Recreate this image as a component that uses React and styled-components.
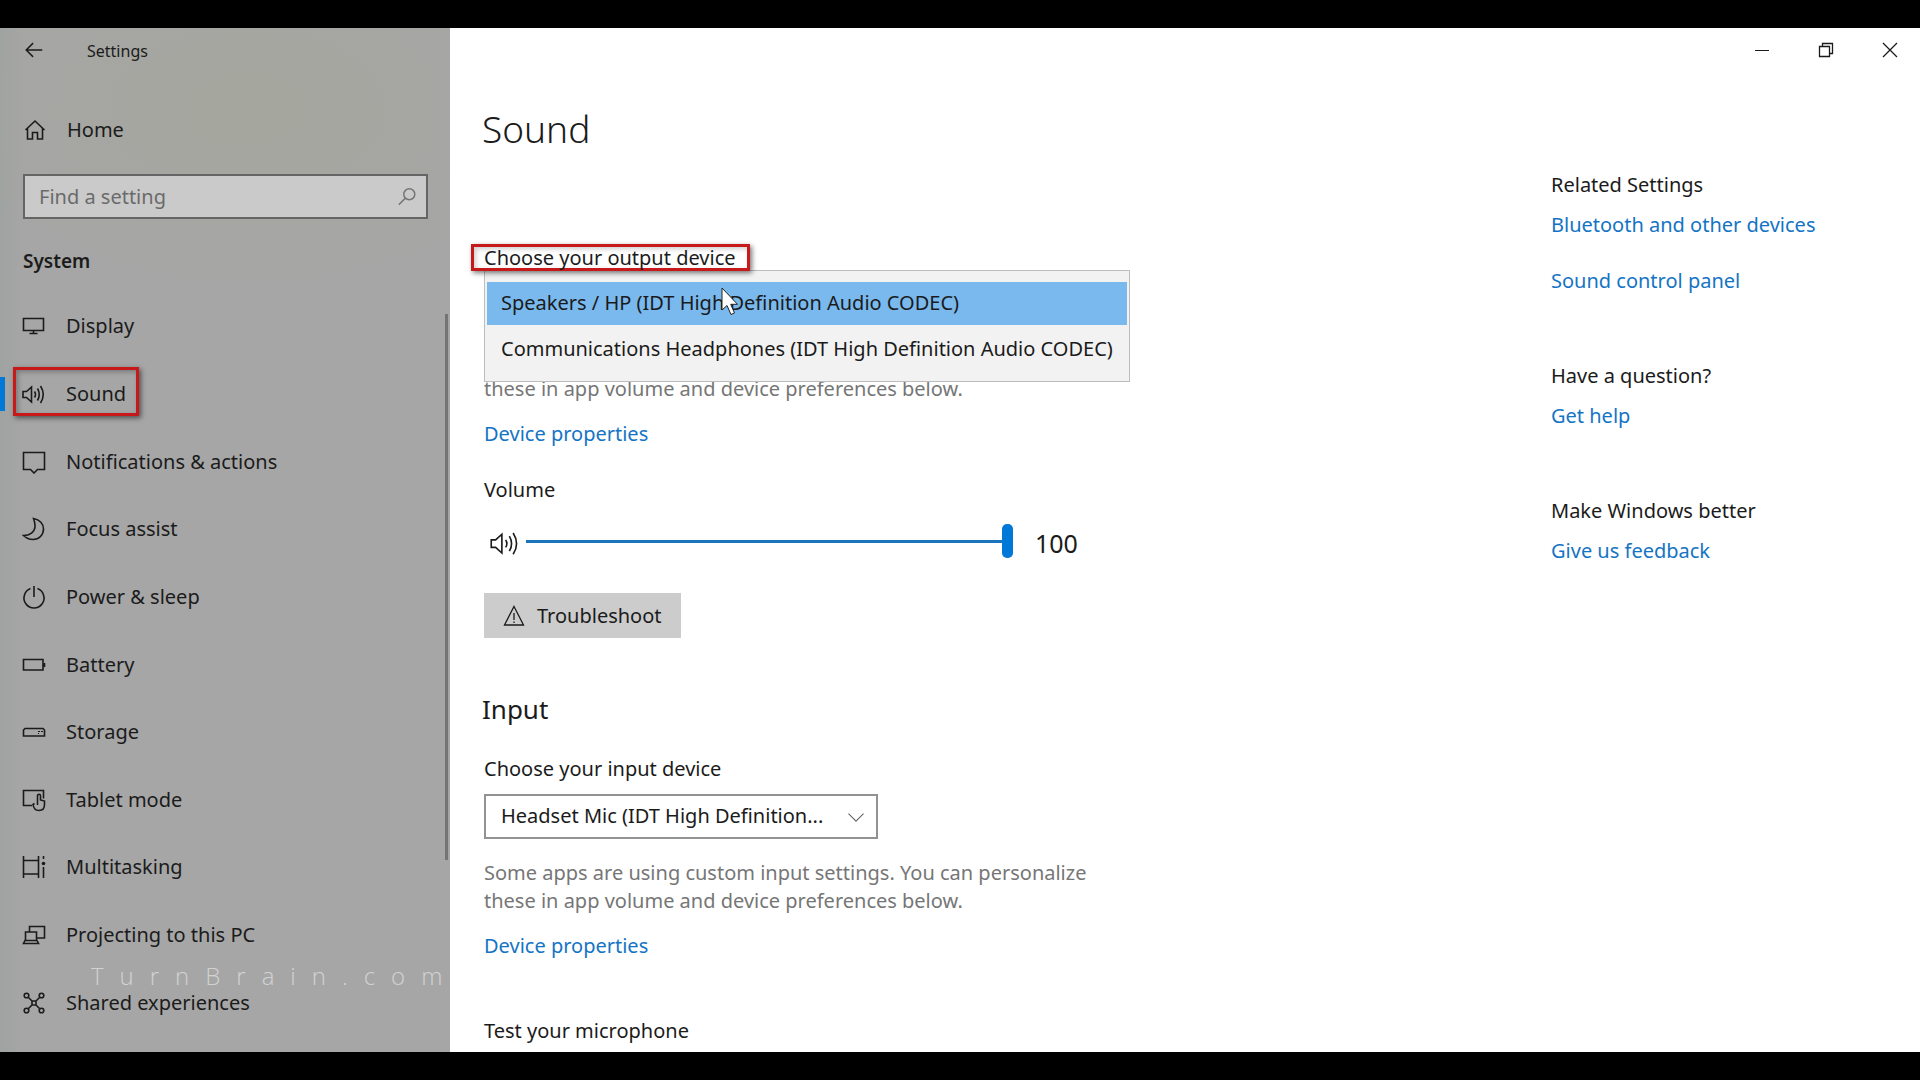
import React, { useState } from "react";
import styled, { createGlobalStyle } from "styled-components";

const icons = {
  back: <path d="M3.5 12H21M11 4.5L3.5 12L11 19.5" />,
  home: <path d="M2.5 12L12 3L21.5 12M4.5 10.5V21H9.5V14.5H14.5V21H19.5V10.5" />,
  search: <><circle cx="14.5" cy="9" r="6" /><path d="M10 13.5L3 20.5" /></>,
  display: <path d="M1.5 4.5H21.5V16.5H1.5ZM11.5 16.5V19.5M7.5 19.5H15.5" />,
  sound: <path d="M1 9.5H4.5L9.5 5V20L4.5 15.5H1ZM12.5 9.5Q14.5 12.5 12.5 15.5M15.5 6.5Q19 12.5 15.5 18.5M18.5 4Q24 12.5 18.5 21" />,
  notifications: <path d="M1.5 2.5H22.5V19.5H15.5L12 23L8.5 19.5H1.5Z" />,
  focus: <path d="M11.5 1.5C18 2.5 21.5 7 21.5 12C21.5 18 17 22.5 11 22.5C7 22.5 4 21 1.5 18.5C8 18.5 12.5 15 13 10C13.2 7 12.5 4 11.5 1.5Z" />,
  power: <path d="M12 1V12M8.5 3.6A10 10 0 1 0 15.5 3.6" />,
  battery: <path d="M1.5 6.5H21V17H1.5ZM22.5 10V14" />,
  storage: <><path d="M3 8.5H21L22.5 10V16H1.5V10Z" /><path d="M16 11.5H18M19 11.5H21M16 13.5H17" strokeWidth="1" /></>,
  tablet: <path d="M10 17.5H1.5V2.5H21.5V10.5M12.5 15.5L11 16.5C11.5 20 13 22.5 17 22.5C21 22.5 22.5 20 22.5 16.5V13L18.5 12V7.5C18.5 5.8 15.5 5.8 15.5 7.5V17" />,
  multitask: <><path d="M1.5 5.5H16.5V19H1.5ZM1.5 1V5.5M16.5 1V5.5M1.5 19V23M16.5 19V23M21.5 1V4M21.5 12V23" /><circle cx="21.5" cy="8.5" r="1.8" fill="currentColor" stroke="none" /></>,
  project: <path d="M7.5 8.5V3.5H22.5V15H14.5M3.5 9H14.5V17.5H3.5ZM3.5 16.5L1.5 20.5H16.5L14.5 16.5" />,
  shared: <>
    <circle cx="4.5" cy="4.5" r="2.3" /><circle cx="19.5" cy="4.5" r="2.3" />
    <circle cx="4.5" cy="19.5" r="2.3" /><circle cx="19.5" cy="19.5" r="2.3" />
    <path d="M6.5 6.5L10 10M17.5 6.5L14 10M6.5 17.5L10 14M17.5 17.5L14 14M10 10H14V14H10Z" />
  </>,
  warning: <path d="M12 2.5L21.5 21H2.5ZM12 9V16M12 17.5V19" />,
  chevron: <path d="M3 8L12 17L21 8" />,
  minimize: <path d="M5 12.5H19" />,
  restore: <path d="M5.5 8.5H15.5V18.5H5.5ZM8.5 8.5V5.5H18.5V15.5H15.5" />,
  close: <path d="M5 5L19 19M19 5L5 19" />,
};

function Icon({ name, size = 24, weight = 1.6 }) {
  return (
    <Svg width={size} height={size} viewBox="0 0 24 24" strokeWidth={weight} aria-hidden="true">
      {icons[name]}
    </Svg>
  );
}

const menu = [
  { icon: "display", label: "Display" },
  { icon: "sound", label: "Sound" },
  { icon: "notifications", label: "Notifications & actions" },
  { icon: "focus", label: "Focus assist" },
  { icon: "power", label: "Power & sleep" },
  { icon: "battery", label: "Battery" },
  { icon: "storage", label: "Storage" },
  { icon: "tablet", label: "Tablet mode" },
  { icon: "multitask", label: "Multitasking" },
  { icon: "project", label: "Projecting to this PC" },
  { icon: "shared", label: "Shared experiences" },
];

const related = [
  { title: "Related Settings", links: ["Bluetooth and other devices", "Sound control panel"] },
  { title: "Have a question?", links: ["Get help"] },
  { title: "Make Windows better", links: ["Give us feedback"] },
];

export default function App() {
  const [volume, setVolume] = useState(100);
  const [output, setOutput] = useState("speakers");

  return <>
    <GlobalStyle />
    <Screen>
      <Sidebar>
        <SideTitle>
          <IconButton aria-label="Back"><Icon name="back" size={22} /></IconButton>
          <AppName>Settings</AppName>
        </SideTitle>
        <HomeLink href="#home"><Icon name="home" />Home</HomeLink>
        <SearchBox>
          <SearchInput type="text" placeholder="Find a setting" aria-label="Find a setting" />
          <Icon name="search" size={22} />
        </SearchBox>
        <Category>System</Category>
        <MenuArea>
          <Menu>
            {menu.map((item) => (
              <MenuItem key={item.label} $active={item.label === "Sound"}>
                <MenuLink href="#page" $marked={item.label === "Sound"}>
                  <Icon name={item.icon} />{item.label}
                </MenuLink>
              </MenuItem>
            ))}
          </Menu>
          <ScrollThumb />
        </MenuArea>
        <Watermark>TurnBrain.com</Watermark>
      </Sidebar>

      <Main>
        <WindowBar>
          <WindowButton aria-label="Minimize"><Icon name="minimize" weight={1} /></WindowButton>
          <WindowButton aria-label="Restore"><Icon name="restore" weight={1.3} /></WindowButton>
          <WindowButton aria-label="Close"><Icon name="close" weight={1.3} /></WindowButton>
        </WindowBar>
        <Columns>
          <Content>
            <Title>Sound</Title>
            <MarkedLabel htmlFor="output">Choose your output device</MarkedLabel>
            <Popup>
              <OutputList id="output" size={2} value={output} onChange={(e) => setOutput(e.target.value)}>
                <option value="speakers">Speakers / HP (IDT High Definition Audio CODEC)</option>
                <option value="headphones">Communications Headphones (IDT High Definition Audio CODEC)</option>
              </OutputList>
              <Cursor width="18" height="29" viewBox="0 0 18 29" aria-hidden="true">
                <path d="M1 1V23L6 18.5L10 27.5L13.5 26L9.7 17.3H16.5Z" />
              </Cursor>
            </Popup>
            <OutputNote>these in app volume and device preferences below.</OutputNote>
            <PropertiesLink href="#output-properties">Device properties</PropertiesLink>

            <VolumeLabel htmlFor="volume">Volume</VolumeLabel>
            <VolumeRow>
              <Icon name="sound" size={30} weight={1.3} />
              <Slider id="volume" type="range" min="0" max="100" value={volume}
                onChange={(e) => setVolume(e.target.value)} />
              <VolumeValue htmlFor="volume">{volume}</VolumeValue>
            </VolumeRow>
            <Troubleshoot><Icon name="warning" weight={1.3} />Troubleshoot</Troubleshoot>

            <SectionTitle>Input</SectionTitle>
            <InputLabel htmlFor="input">Choose your input device</InputLabel>
            <SelectBox>
              <Select id="input">
                <option>Headset Mic (IDT High Definition...</option>
              </Select>
              <Icon name="chevron" size={20} weight={1.3} />
            </SelectBox>
            <Note>Some apps are using custom input settings. You can personalize these in app volume and device preferences below.</Note>
            <PropertiesLink href="#input-properties">Device properties</PropertiesLink>
            <TestTitle>Test your microphone</TestTitle>
          </Content>

          <Aside>
            {related.map((group) => (
              <section key={group.title}>
                <GroupTitle>{group.title}</GroupTitle>
                <GroupLinks>
                  {group.links.map((link) => <Link key={link} href="#related">{link}</Link>)}
                </GroupLinks>
              </section>
            ))}
          </Aside>
        </Columns>
      </Main>
    </Screen>
  </>;
}

const GlobalStyle = createGlobalStyle`
  * {
    box-sizing: border-box;
  }
  body {
    margin: 0;
    background: #000;
    color: #1b1b1b;
    font-family: "Noto Sans", "Open Sans", sans-serif;
    font-size: 20px;
    line-height: 28px;
  }
  button, input, select, option {
    font: inherit;
    color: inherit;
  }
`;

const Svg = styled.svg`
  flex: none;
  fill: none;
  stroke: currentColor;
`;

const Screen = styled.div`
  display: flex;
  min-height: 100vh;
  border: solid #000;
  border-width: 28px 0;
`;

/* sidebar */
const Sidebar = styled.aside`
  position: relative;
  display: flex;
  flex-direction: column;
  flex: none;
  width: 450px;
  background:
    radial-gradient(ellipse 300px 180px at 55% 8%, #a5a69d, transparent),
    linear-gradient(90deg, #9fa3a1, #a6a6a6 24px);
`;
const SideTitle = styled.header`
  display: flex;
  align-items: center;
  gap: 42px;
  height: 44px;
  padding-left: 23px;
`;
const IconButton = styled.button`
  display: flex;
  padding: 0;
  border: 0;
  background: none;
`;
const AppName = styled.span`
  padding-top: 2px;
  font-size: 16px;
`;
const HomeLink = styled.a`
  display: flex;
  align-items: center;
  gap: 20px;
  margin: 44px 0 0 23px;
  color: inherit;
  text-decoration: none;
`;
const SearchBox = styled.div`
  display: flex;
  align-items: center;
  height: 45px;
  margin: 30px 22px 0 23px;
  padding: 0 8px 0 14px;
  border: 2px solid #656565;
  background: #cacaca;
  color: #757575;
`;
const SearchInput = styled.input`
  flex: 1;
  min-width: 0;
  padding: 0;
  border: 0;
  outline: 0;
  background: none;
  &::placeholder {
    color: #6a6a6a;
  }
`;
const Category = styled.h2`
  margin: 28px 0 0 23px;
  font-size: 19px;
  font-weight: 600;
`;
const MenuArea = styled.nav`
  display: flex;
  flex: 1;
  margin-top: 18px;
  padding-bottom: 15px;
`;
const Menu = styled.ul`
  display: flex;
  flex: 1;
  flex-direction: column;
  margin: 0;
  padding: 0;
  list-style: none;
`;
const MenuItem = styled.li`
  display: flex;
  flex: 1;
  align-items: center;
  min-height: 50px;
  &::before {
    content: "";
    width: 5px;
    height: 34px;
    background: ${(p) => (p.$active ? "#0078d7" : "none")};
  }
`;
const MenuLink = styled.a`
  display: flex;
  align-items: center;
  gap: 20px;
  height: 49px;
  margin: 0 0 5px 8px;
  padding: 4px 10px 0 6px;
  border: 3px solid ${(p) => (p.$marked ? "#c8191a" : "transparent")};
  box-shadow: ${(p) => (p.$marked ? "2px 2px 5px #0008, inset 2px 2px 5px #0004" : "none")};
  color: inherit;
  text-decoration: none;
`;
const ScrollThumb = styled.div`
  width: 3px;
  height: 546px;
  margin: 21px 2px 0 0;
  background: #747474;
`;
const Watermark = styled.div`
  position: absolute;
  left: 91px;
  bottom: 62px;
  color: #ffffff80;
  font-family: "Open Sans", sans-serif;
  font-size: 24px;
  font-weight: 300;
  letter-spacing: 16px;
  white-space: nowrap;
`;

/* main pane */
const Main = styled.main`
  flex: 1;
  min-width: 0;
  background: #fff;
`;
const WindowBar = styled.header`
  display: flex;
  justify-content: flex-end;
  gap: 4px;
  height: 44px;
`;
const WindowButton = styled(IconButton)`
  align-items: center;
  justify-content: center;
  width: 60px;
`;
const Columns = styled.div`
  display: flex;
  justify-content: space-between;
`;
const Content = styled.div`
  display: flex;
  flex-direction: column;
  align-items: flex-start;
  width: 680px;
  padding: 33px 0 7px 34px;
`;
const Title = styled.h1`
  margin: 0 0 0 -2px;
  font-size: 37px;
  font-weight: 300;
  line-height: 48px;
`;
const MarkedLabel = styled.label`
  z-index: 1;
  margin: 91px 0 0 -13px;
  padding: 0 11px 0 10px;
  border: 3px solid #c8191a;
  box-shadow: 2px 2px 5px #0008, inset 2px 2px 5px #0003;
  line-height: 21px;
`;
const Popup = styled.div`
  position: relative;
  width: 646px;
  margin-top: -1px;
`;
const OutputList = styled.select`
  display: block;
  width: 100%;
  height: 112px;
  padding: 11px 2px 10px;
  border: 1px solid #bdbdbd;
  border-radius: 0;
  outline: 0;
  overflow: hidden;
  appearance: none;
  background: #f2f2f2;
  option {
    height: 43px;
    margin-bottom: 3px;
    padding: 7px 14px 0;
    color: #1b1b1b;
  }
  option:checked {
    background: linear-gradient(#79b9ee, #79b9ee);
    color: #1b1b1b;
  }
`;
const Cursor = styled.svg`
  position: absolute;
  left: 237px;
  top: 17px;
  fill: #fff;
  stroke: #222;
`;
const Note = styled.p`
  width: 620px;
  margin: 20px 0 0;
  color: #767676;
`;
const OutputNote = styled(Note)`
  margin-top: -7px;
`;
const Link = styled.a`
  color: #1474c4;
  text-decoration: none;
`;
const PropertiesLink = styled(Link)`
  margin-top: 17px;
`;
const VolumeLabel = styled.label`
  margin-top: 28px;
`;
const VolumeRow = styled.div`
  display: flex;
  align-items: center;
  height: 34px;
  margin: 20px 0 0 6px;
  svg {
    align-self: flex-end;
  }
`;
const Slider = styled.input`
  width: 487px;
  height: 34px;
  margin: 0 0 0 6px;
  appearance: none;
  background: linear-gradient(#1c74bd, #1c74bd) center / 100% 3px no-repeat;
  &::-webkit-slider-thumb {
    appearance: none;
    width: 11px;
    height: 34px;
    border-radius: 5px;
    background: #0078d7;
  }
`;
const VolumeValue = styled.output`
  margin-left: 22px;
  padding-top: 3px;
  font-size: 25px;
`;
const Troubleshoot = styled.button`
  display: flex;
  align-items: center;
  gap: 11px;
  height: 45px;
  margin-top: 35px;
  padding: 0 19px 0 18px;
  border: 0;
  background: #ccc;
`;
const SectionTitle = styled.h2`
  margin: 53px 0 0 -2px;
  font-size: 26px;
  font-weight: 400;
  line-height: 36px;
`;
const InputLabel = styled.label`
  margin-top: 28px;
`;
const SelectBox = styled.div`
  display: grid;
  align-items: center;
  width: 394px;
  margin-top: 11px;
  > * {
    grid-area: 1 / 1;
  }
  svg {
    justify-self: end;
    margin-right: 12px;
    color: #666;
    pointer-events: none;
  }
`;
const Select = styled.select`
  width: 100%;
  height: 45px;
  padding: 0 36px 2px 15px;
  border: 2px solid #929292;
  border-radius: 0;
  appearance: none;
  background: #fff;
`;
const TestTitle = styled.h3`
  margin: 57px 0 0;
  font-size: 20px;
  font-weight: 400;
`;

/* links on the right */
const Aside = styled.aside`
  display: flex;
  flex-direction: column;
  gap: 67px;
  width: 369px;
  padding-top: 99px;
`;
const GroupTitle = styled.h3`
  margin: 0 0 12px;
  font-size: 20px;
  font-weight: 400;
`;
const GroupLinks = styled.div`
  display: flex;
  flex-direction: column;
  align-items: flex-start;
  gap: 28px;
`;
